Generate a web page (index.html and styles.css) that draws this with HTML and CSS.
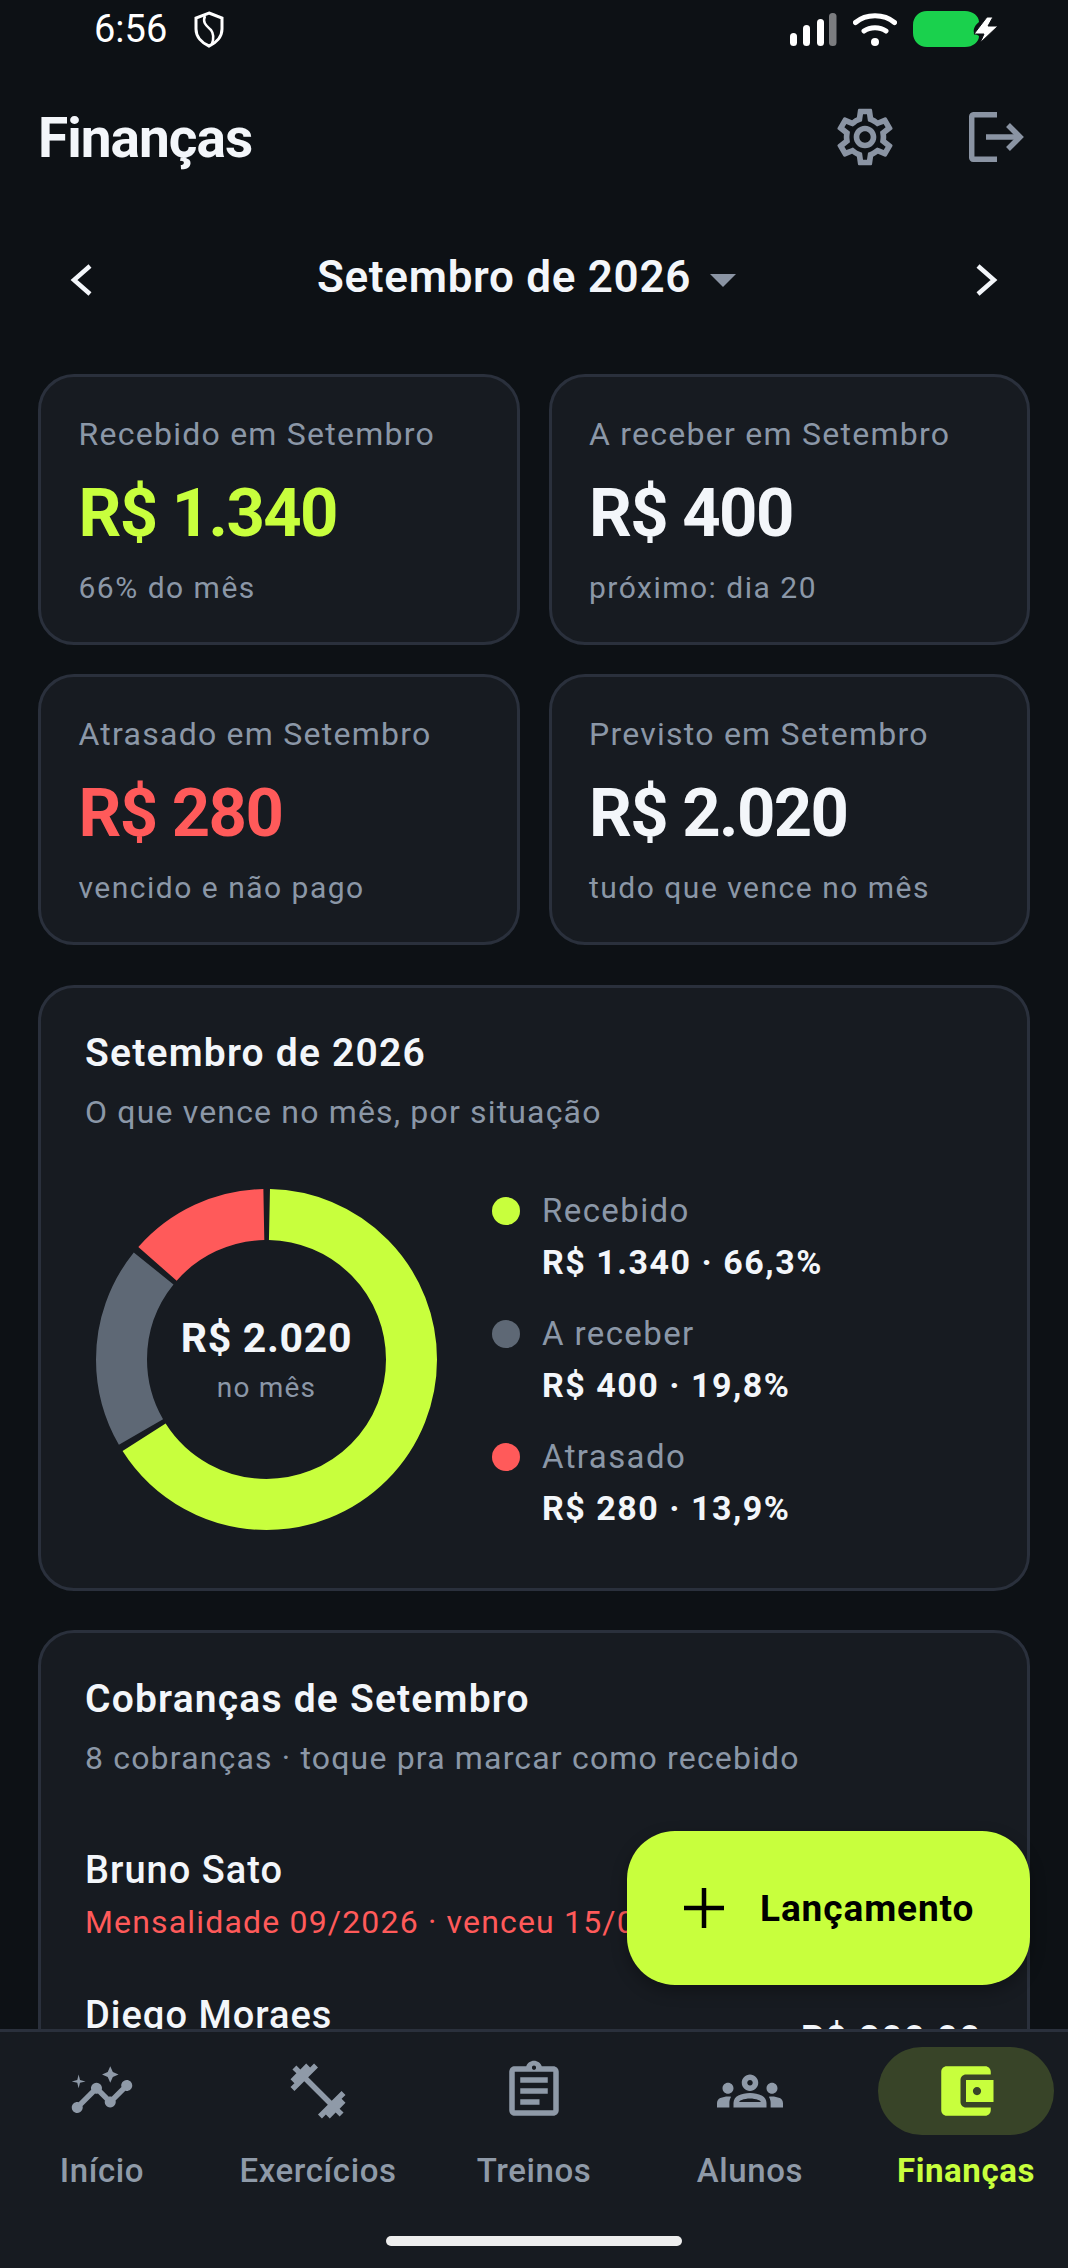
FILE: index.html
```html
<!DOCTYPE html>
<html lang="pt-BR">
  <head>
    <meta charset="UTF-8" />
    <meta name="viewport" content="width=device-width, initial-scale=1.0" />
    <title>Finanças</title>
    <link rel="stylesheet" href="styles.css">
  </head>
  <body>
    <div class="phone">
      <div class="content">
        <div class="status">
          <div class="status-left">
            <span class="clock">6:56</span>
            <svg class="shield" viewBox="0 0 30 37" fill="none" stroke="#fff" stroke-width="3">
              <path d="M15 2 L28 7 V18 C28 26 22 32 15 35 C8 32 2 26 2 18 V7 Z" />
              <path d="M11 5 C8 12 13 15 17 19 C20 23 20 27 18 33" stroke-width="2.5" />
            </svg>
          </div>
          <div class="status-right">
            <svg class="signal" viewBox="0 0 47 33">
              <rect x="0" y="20" width="7" height="13" rx="3.5" fill="#fff" />
              <rect x="13" y="12" width="7" height="21" rx="3.5" fill="#fff" />
              <rect x="27" y="6" width="7" height="27" rx="3.5" fill="#fff" />
              <rect x="39" y="0" width="7.5" height="33" rx="3.5" fill="#7b7d80" />
            </svg>
            <svg class="wifi" viewBox="0 0 44 33" fill="none" stroke="#fff" stroke-linecap="round">
              <path d="M2.5 9.5 C13 0.5 31 0.5 41.5 9.5" stroke-width="5" />
              <path d="M11 18 C17 13.5 27 13.5 33 18" stroke-width="5" />
              <circle cx="22" cy="29" r="4" fill="#fff" stroke="none" />
            </svg>
            <svg class="battery" viewBox="0 0 85 36">
              <path d="M14 0 H52 C60 0 66 5 66 11 C62 14 60 18 61 22 L66 25 C66 31 60 36 52 36 H14 C6 36 0 30 0 22 V14 C0 6 6 0 14 0 Z" fill="#1ad14d" />
              <path d="M74 6 L61 23 L71 23 L67 32 L85 15 L75 15 L80 6 Z" fill="#fff" stroke="#0d1115" stroke-width="1" />
            </svg>
          </div>
        </div>

        <div class="header">
          <h1>Finanças</h1>
          <div class="header-actions">
            <svg class="icon-settings" viewBox="0 0 24 24" fill="#8a94a3">
              <path d="M19.43 12.98c.04-.32.07-.64.07-.98 0-.34-.03-.66-.07-.98l2.11-1.65c.19-.15.24-.42.12-.64l-2-3.46c-.09-.16-.26-.25-.44-.25-.06 0-.12.01-.17.03l-2.49 1c-.52-.4-1.08-.73-1.69-.98l-.38-2.65C14.46 2.18 14.25 2 14 2h-4c-.25 0-.46.18-.49.42l-.38 2.65c-.61.25-1.17.59-1.69.98l-2.49-1c-.06-.02-.12-.03-.18-.03-.17 0-.34.09-.43.25l-2 3.46c-.13.22-.07.49.12.64l2.11 1.65c-.04.32-.07.65-.07.98 0 .33.03.66.07.98l-2.11 1.65c-.19.15-.24.42-.12.64l2 3.46c.09.16.26.25.44.25.06 0 .12-.01.17-.03l2.49-1c.52.4 1.08.73 1.69.98l.38 2.65c.03.24.24.42.49.42h4c.25 0 .46-.18.49-.42l.38-2.65c.61-.25 1.17-.59 1.69-.98l2.49 1c.06.02.12.03.18.03.17 0 .34-.09.43-.25l2-3.46c.12-.22.07-.49-.12-.64l-2.11-1.65zm-1.98-1.71c.04.31.05.52.05.73 0 .21-.02.43-.05.73l-.14 1.13.89.7 1.08.84-.7 1.21-1.27-.51-1.04-.42-.9.68c-.43.32-.84.56-1.25.73l-1.06.43-.16 1.13-.2 1.35h-1.4l-.19-1.35-.16-1.13-1.06-.43c-.43-.18-.83-.41-1.23-.71l-.91-.7-1.06.43-1.27.51-.7-1.21 1.08-.84.89-.7-.14-1.13c-.03-.31-.05-.54-.05-.74s.02-.43.05-.73l.14-1.13-.89-.7-1.08-.84.7-1.21 1.27.51 1.04.42.9-.68c.43-.32.84-.56 1.25-.73l1.06-.43.16-1.13.2-1.35h1.39l.19 1.35.16 1.13 1.06.43c.43.18.83.41 1.23.71l.91.7 1.06-.43 1.27-.51.7 1.21-1.07.85-.89.7.14 1.13zM12 8c-2.21 0-4 1.79-4 4s1.79 4 4 4 4-1.79 4-4-1.79-4-4-4zm0 6c-1.1 0-2-.9-2-2s.9-2 2-2 2 .9 2 2-.9 2-2 2z" />
            </svg>
            <svg class="icon-logout" viewBox="0 0 55 50" fill="none" stroke="#8a94a3" stroke-width="5.5">
              <path d="M28 2.7 H5 Q2.7 2.7 2.7 5 V45 Q2.7 47.3 5 47.3 H28" />
              <path d="M17 25 H51" />
              <path d="M39 13 L51 25 L39 37" />
            </svg>
          </div>
        </div>

        <div class="month-nav">
          <svg class="chevron" viewBox="0 0 22 32" fill="none" stroke="#f3f6fa" stroke-width="4.5">
            <path d="M20 2 L4 16 L20 30" />
          </svg>
          <div class="month-label">
            <span>Setembro de 2026</span>
            <i class="caret"></i>
          </div>
          <svg class="chevron" viewBox="0 0 22 32" fill="none" stroke="#f3f6fa" stroke-width="4.5">
            <path d="M2 2 L18 16 L2 30" />
          </svg>
        </div>

        <div class="stats">
          <div class="stat">
            <p class="stat-label">Recebido em Setembro</p>
            <p class="stat-value lime">R$ 1.340</p>
            <p class="stat-note">66% do mês</p>
          </div>
          <div class="stat">
            <p class="stat-label">A receber em Setembro</p>
            <p class="stat-value">R$ 400</p>
            <p class="stat-note">próximo: dia 20</p>
          </div>
          <div class="stat">
            <p class="stat-label">Atrasado em Setembro</p>
            <p class="stat-value red">R$ 280</p>
            <p class="stat-note">vencido e não pago</p>
          </div>
          <div class="stat">
            <p class="stat-label">Previsto em Setembro</p>
            <p class="stat-value">R$ 2.020</p>
            <p class="stat-note">tudo que vence no mês</p>
          </div>
        </div>

        <div class="card">
          <h2>Setembro de 2026</h2>
          <p class="card-sub">O que vence no mês, por situação</p>
          <div class="chart-row">
            <div class="donut">
              <svg viewBox="0 0 341 341" fill="none" stroke-width="51">
                <g transform="rotate(-90 170.5 170.5)">
                  <circle cx="170.5" cy="170.5" r="145" stroke="#c8ff3d" stroke-dasharray="598 313" stroke-dashoffset="-3" />
                  <circle cx="170.5" cy="170.5" r="145" stroke="#5e6875" stroke-dasharray="174.4 736.6" stroke-dashoffset="-607" />
                  <circle cx="170.5" cy="170.5" r="145" stroke="#ff5a5a" stroke-dasharray="120.6 790.4" stroke-dashoffset="-787.4" />
                </g>
              </svg>
              <div class="donut-center">
                <strong>R$ 2.020</strong>
                <span>no mês</span>
              </div>
            </div>
            <ul class="legend">
              <li>
                <div class="legend-name"><i class="dot bg-lime"></i>Recebido</div>
                <div class="legend-value">R$ 1.340 · 66,3%</div>
              </li>
              <li>
                <div class="legend-name"><i class="dot bg-grey"></i>A receber</div>
                <div class="legend-value">R$ 400 · 19,8%</div>
              </li>
              <li>
                <div class="legend-name"><i class="dot bg-red"></i>Atrasado</div>
                <div class="legend-value">R$ 280 · 13,9%</div>
              </li>
            </ul>
          </div>
        </div>

        <div class="card charges">
          <h2>Cobranças de Setembro</h2>
          <p class="card-sub">8 cobranças · toque pra marcar como recebido</p>
          <div class="charge first">
            <div>
              <p class="charge-name">Bruno Sato</p>
              <p class="charge-info red">Mensalidade 09/2026 · venceu 15/09</p>
            </div>
            <span class="charge-amount">R$ 280,00</span>
          </div>
          <div class="charge">
            <div>
              <p class="charge-name">Diego Moraes</p>
              <p class="charge-info">Mensalidade 09/2026 · vence 20/09</p>
            </div>
            <span class="charge-amount">R$ 200,00</span>
          </div>
        </div>
      </div>

      <nav class="tabbar">
        <div class="tab">
          <div class="tab-icon">
            <svg viewBox="0 0 24 24" fill="#8f9aa8">
              <path d="M21 8c-1.45 0-2.26 1.44-1.93 2.51l-3.55 3.56c-.3-.09-.74-.09-1.04 0l-2.55-2.55C12.27 10.45 11.46 9 10 9c-1.45 0-2.27 1.44-1.93 2.52l-4.56 4.55C2.44 15.74 1 16.55 1 18c0 1.1.9 2 2 2 1.45 0 2.26-1.44 1.93-2.51l4.55-4.56c.3.09.74.09 1.04 0l2.55 2.55C12.73 16.55 13.54 18 15 18c1.45 0 2.27-1.44 1.93-2.52l3.56-3.55c1.07.33 2.51-.48 2.51-1.93 0-1.1-.9-2-2-2z" />
              <path d="M15 9l.94-2.07L18 6l-2.06-.93L15 3l-.92 2.07L12 6l2.08.93zM3.5 11L4 9l2-.5L4 8l-.5-2L3 8l-2 .5L3 9z" />
            </svg>
          </div>
          <span>Início</span>
        </div>
        <div class="tab">
          <div class="tab-icon">
            <svg viewBox="0 0 24 24" fill="#8f9aa8">
              <path d="M20.57 14.86L22 13.43 20.57 12 17 15.57 8.43 7 12 3.43 10.57 2 9.14 3.43 7.71 2 5.57 4.14 4.14 2.71 2.71 4.14l1.43 1.43L2 7.71l1.43 1.43L2 10.57 3.43 12 7 8.43 15.57 17 12 20.57 13.43 22l1.43-1.43L16.29 22l2.14-2.14 1.43 1.43 1.43-1.43-1.43-1.43L22 16.29z" />
            </svg>
          </div>
          <span>Exercícios</span>
        </div>
        <div class="tab">
          <div class="tab-icon">
            <svg viewBox="0 0 24 24" fill="#8f9aa8">
              <path d="M7 15h7v2H7zm0-4h10v2H7zm0-4h10v2H7z" />
              <path d="M19 3h-4.18C14.4 1.84 13.3 1 12 1c-1.3 0-2.4.84-2.82 2H5c-.14 0-.27.01-.4.04-.39.08-.74.28-1.01.55-.18.18-.33.4-.43.64-.1.23-.16.49-.16.77v14c0 .27.06.54.16.78s.25.45.43.64c.27.27.62.47 1.01.55.13.02.26.03.4.03h14c1.1 0 2-.9 2-2V5c0-1.1-.9-2-2-2zm-7-.25c.41 0 .75.34.75.75s-.34.75-.75.75-.75-.34-.75-.75.34-.75.75-.75zM19 19H5V5h14v14z" />
            </svg>
          </div>
          <span>Treinos</span>
        </div>
        <div class="tab">
          <div class="tab-icon">
            <svg viewBox="0 0 24 24" fill="#8f9aa8" fill-rule="evenodd">
              <path d="M4 13c1.1 0 2-.9 2-2s-.9-2-2-2-2 .9-2 2 .9 2 2 2zm1.13 1.1c-.37-.06-.74-.1-1.13-.1-.99 0-1.93.21-2.78.58C.48 14.9 0 15.62 0 16.43V18h4.5v-1.61c0-.83.23-1.61.63-2.29zM20 13c1.1 0 2-.9 2-2s-.9-2-2-2-2 .9-2 2 .9 2 2 2zm4 3.43c0-.81-.48-1.53-1.22-1.85-.85-.37-1.79-.58-2.78-.58-.39 0-.76.04-1.13.1.4.68.63 1.46.63 2.29V18H24v-1.57zm-7.76-2.78C15.07 13.14 13.63 12.75 12 12.75c-1.63 0-3.07.39-4.24.9C6.68 14.13 6 15.21 6 16.39V18h12v-1.61c0-1.18-.68-2.26-1.76-2.74zM8.07 16c.09-.23.13-.39.91-.69.97-.38 1.99-.56 3.02-.56s2.05.18 3.02.56c.77.3.81.46.91.69H8.07zM12 8c.55 0 1 .45 1 1s-.45 1-1 1-1-.45-1-1 .45-1 1-1m0-2c-1.66 0-3 1.34-3 3s1.34 3 3 3 3-1.34 3-3-1.34-3-3-3z" />
            </svg>
          </div>
          <span>Alunos</span>
        </div>
        <div class="tab active">
          <div class="tab-icon">
            <svg viewBox="0 0 24 24" fill="#c8ff3d">
              <path d="M21 18v1c0 1.1-.9 2-2 2H5c-1.11 0-2-.9-2-2V5c0-1.1.89-2 2-2h14c1.1 0 2 .9 2 2v1h-9c-1.11 0-2 .9-2 2v8c0 1.1.89 2 2 2h9zm-9-2h10V8H12v8zm4-2.5c-.83 0-1.5-.67-1.5-1.5s.67-1.5 1.5-1.5 1.5.67 1.5 1.5-.67 1.5-1.5 1.5z" />
            </svg>
          </div>
          <span>Finanças</span>
        </div>
      </nav>

      <button class="fab">
        <svg viewBox="0 0 42 42" stroke="#000" stroke-width="4.5"><path d="M21 1 V41 M1 21 H41" /></svg>
        Lançamento
      </button>
      <div class="home-bar"></div>
    </div>
  </body>
</html>
```

FILE: styles.css
```css
* {
  margin: 0;
  padding: 0;
  box-sizing: border-box;
}

body {
  background-color: #0d1115;
  font-family: Roboto, 'Liberation Sans', sans-serif;
  color: #f3f6fa;
}

.phone {
  position: relative;
  width: 1068px;
  height: 2268px;
  display: flex;
  flex-direction: column;
  overflow: hidden;
}

.content {
  flex: 1;
  min-height: 0;
  overflow: hidden;
}

.lime {
  color: #c8ff3d;
}

.red {
  color: #ff5a5a;
}

/* status bar */
.status {
  height: 58px;
  display: flex;
  justify-content: space-between;
  align-items: center;
  padding: 0 70px 0 94px;
}

.status-left {
  display: flex;
  align-items: center;
  gap: 27px;
}

.clock {
  font-size: 38px;
  color: #fff;
}

.shield {
  width: 30px;
  height: 37px;
}

.status-right {
  display: flex;
  align-items: center;
}

.signal {
  width: 47px;
  height: 33px;
}

.wifi {
  width: 44px;
  height: 33px;
  margin-left: 16px;
}

.battery {
  width: 85px;
  height: 36px;
  margin-left: 16px;
}

/* header */
.header {
  height: 157px;
  display: flex;
  justify-content: space-between;
  align-items: center;
  padding: 0 44px 0 38px;
}

h1 {
  padding-top: 3px;
  font-size: 55px;
  font-weight: 700;
  letter-spacing: -1px;
}

.header-actions {
  display: flex;
  align-items: center;
  gap: 70px;
}

.icon-settings {
  width: 68px;
  height: 68px;
}

.icon-logout {
  width: 55px;
  height: 50px;
}

/* month selector */
.month-nav {
  height: 130px;
  display: flex;
  justify-content: space-between;
  align-items: center;
  padding: 0 70px;
}

.chevron {
  width: 22px;
  height: 32px;
}

.month-label {
  display: flex;
  align-items: center;
  gap: 19px;
  margin-right: 15px;
  font-size: 44px;
  font-weight: 600;
  letter-spacing: 0.7px;
}

.month-label span {
  margin-bottom: 6px;
}

.caret {
  width: 0;
  height: 0;
  border-left: 13px solid transparent;
  border-right: 13px solid transparent;
  border-top: 13px solid #8a94a3;
}

/* summary cards */
.stats {
  margin: 29px 38px 0;
  display: grid;
  grid-template-columns: 1fr 1fr;
  gap: 29px;
}

.stat {
  height: 271px;
  padding: 37px 37.5px;
  background-color: #171b21;
  border: 3px solid #2a303c;
  border-radius: 36px;
}

.stat-label {
  font-size: 32px;
  line-height: 40px;
  letter-spacing: 1.25px;
  color: #8b97a7;
}

.stat-value {
  margin-top: 24px;
  font-size: 67px;
  line-height: 70px;
  font-weight: 700;
  letter-spacing: -1.6px;
}

.stat-note {
  margin-top: 21px;
  font-size: 30px;
  line-height: 38px;
  letter-spacing: 1.5px;
  color: #8b97a7;
}

/* big cards */
.card {
  margin: 40px 38px 0;
  padding: 42px 45px 0 44px;
  background-color: #171b21;
  border: 3px solid #2a303c;
  border-radius: 36px;
}

h2 {
  font-size: 39px;
  line-height: 46px;
  font-weight: 600;
  letter-spacing: 1.2px;
}

.card-sub {
  margin-top: 16px;
  font-size: 32px;
  line-height: 40px;
  letter-spacing: 1.17px;
  color: #8b97a7;
}

.chart-row {
  display: flex;
  align-items: center;
  gap: 55px;
  margin-top: 57px;
  padding: 0 0 58px 11px;
}

.donut {
  position: relative;
  width: 341px;
  height: 341px;
  flex-shrink: 0;
}

.donut svg {
  display: block;
  width: 100%;
  height: 100%;
}

.donut-center {
  position: absolute;
  inset: 0;
  display: flex;
  flex-direction: column;
  align-items: center;
  justify-content: center;
  padding-top: 1px;
}

.donut-center strong {
  font-size: 41px;
  line-height: 48px;
  font-weight: 700;
  letter-spacing: 0.7px;
}

.donut-center span {
  margin-top: 8px;
  font-size: 28px;
  line-height: 36px;
  letter-spacing: 1.2px;
  color: #8b97a7;
}

.legend {
  list-style: none;
  display: flex;
  flex-direction: column;
  gap: 31px;
}

.legend-name {
  display: flex;
  align-items: center;
  gap: 22px;
  font-size: 33px;
  line-height: 40px;
  letter-spacing: 1.4px;
  color: #8b97a7;
}

.dot {
  width: 28px;
  height: 28px;
  border-radius: 50%;
}

.bg-lime {
  background-color: #c8ff3d;
}

.bg-grey {
  background-color: #5e6875;
}

.bg-red {
  background-color: #ff5a5a;
}

.legend-value {
  margin-top: 10px;
  padding-left: 50px;
  font-size: 34px;
  line-height: 42px;
  font-weight: 700;
  letter-spacing: 1.5px;
}

/* charges */
.charges {
  margin-top: 39px;
  padding-top: 43px;
  padding-bottom: 60px;
}

.charge {
  display: flex;
  justify-content: space-between;
  align-items: center;
  margin-top: 50px;
}

.charge.first {
  margin-top: 69px;
}

.charge-name {
  font-size: 38px;
  line-height: 46px;
  font-weight: 500;
  letter-spacing: 1px;
}

.charge-info {
  margin-top: 9px;
  font-size: 32px;
  line-height: 40px;
  letter-spacing: 1.17px;
  color: #8b97a7;
}

.charge-info.red {
  color: #ff5a5a;
}

.charge-amount {
  padding-bottom: 2px;
  font-size: 36px;
  line-height: 46px;
  font-weight: 700;
  letter-spacing: 1.8px;
}

/* bottom navigation */
.tabbar {
  height: 239px;
  display: grid;
  grid-template-columns: repeat(5, 216px);
  justify-content: center;
  background-color: #171b21;
  border-top: 3px solid #2a303c;
}

.tab {
  display: flex;
  flex-direction: column;
  align-items: center;
  padding-top: 15px;
  font-size: 33px;
  line-height: 40px;
  font-weight: 500;
  letter-spacing: 0.6px;
  color: #8f9aa8;
}

.tab-icon {
  width: 176px;
  height: 88px;
  border-radius: 44px;
  display: flex;
  align-items: center;
  justify-content: center;
  margin-bottom: 16px;
}

.tab-icon svg {
  width: 66px;
  height: 66px;
}

.tab.active {
  font-weight: 700;
  color: #c8ff3d;
}

.tab.active .tab-icon {
  background-color: #384428;
}

.fab {
  position: absolute;
  left: 627px;
  top: 1831px;
  width: 403px;
  height: 154px;
  display: flex;
  align-items: center;
  gap: 35px;
  padding-left: 56px;
  border: none;
  border-radius: 48px;
  background-color: #c8ff3d;
  font-family: inherit;
  font-size: 37px;
  font-weight: 700;
  letter-spacing: 0.9px;
  color: #000;
  box-shadow: 0 6px 16px rgba(0, 0, 0, 0.3);
}

.fab svg {
  width: 42px;
  height: 42px;
}

.home-bar {
  position: absolute;
  left: 386px;
  top: 2236px;
  width: 296px;
  height: 10px;
  border-radius: 5px;
  background-color: #eeeeee;
}
```
